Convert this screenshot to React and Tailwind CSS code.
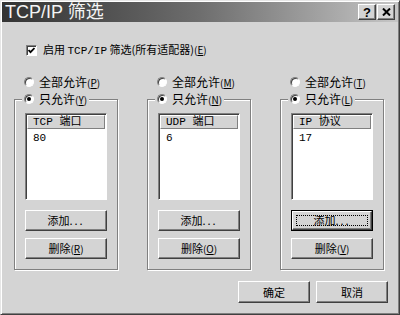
const FACE = "bg-[#d4d4d4]";
const RAISED =
  "border border-t-white border-l-white border-r-[#404040] border-b-[#404040] shadow-[inset_-1px_-1px_0_#808080]";
const SUNKEN =
  "border border-t-[#808080] border-l-[#808080] border-r-white border-b-white shadow-[inset_1px_1px_0_#404040]";
const CJK = "font-['Noto_Sans_CJK_SC',sans-serif]";
const MONO = "font-['Liberation_Mono','Noto_Sans_CJK_SC',monospace]";

const Key = ({ k }) => (
  <span className="text-[10px]">
    (<u>{k}</u>)
  </span>
);

const Radio = ({ checked, label, k }) => (
  <div className="flex items-center gap-[5px] h-[14px]">
    <span className={`w-[10px] h-[10px] rounded-full bg-white flex items-center justify-center ${SUNKEN}`}>
      {checked && <span className="w-[4px] h-[4px] rounded-full bg-black" />}
    </span>
    <span className={`text-[12px] leading-none text-black ${CJK}`}>
      {label}
      <Key k={k} />
    </span>
  </div>
);

const Button = ({ children, focused, className = "" }) => (
  <div className={`${focused ? "border border-black" : ""} ${className}`}>
    <div className={`h-full flex items-center justify-center ${FACE} ${RAISED}`}>
      <div
        className={`flex items-center justify-center text-[11px] leading-none text-black ${CJK} ${
          focused ? "w-[calc(100%-6px)] h-[calc(100%-6px)] border border-dotted border-black" : ""
        }`}
      >
        {children}
      </div>
    </div>
  </div>
);

const Column = ({ all, allKey, only, onlyKey, head, item, delKey, focused }) => (
  <div className="w-[104px] flex flex-col">
    <div className="pl-[10px]">
      <Radio label={all} k={allKey} />
    </div>
    <fieldset className="mt-[3px] min-w-0 border border-[#808080] shadow-[1px_1px_0_white,inset_1px_1px_0_white] px-[10px] pt-[7px] pb-[10px]">
      <legend className={`ml-[-3px] px-[2px] ${FACE}`}>
        <Radio checked label={only} k={onlyKey} />
      </legend>
      <div className={`h-[87px] bg-white p-[1px] ${SUNKEN}`}>
        <div className={`h-[14px] flex items-center pl-[5px] ${FACE} border border-t-white border-l-white border-r-[#808080] border-b-[#808080]`}>
          <span className={`text-[11px] leading-none ${MONO}`}>{head}</span>
        </div>
        <div className={`pl-[6px] pt-[2px] text-[11px] leading-[14px] ${MONO}`}>{item}</div>
      </div>
      <Button focused={focused} className="mt-[10px] h-[21px]">
        添加<span className="tracking-[2px]">...</span>
      </Button>
      <Button className="mt-[7px] h-[21px]">
        删除<Key k={delKey} />
      </Button>
    </fieldset>
  </div>
);

export default function App() {
  return (
    <div
      className={`w-[400px] h-[315px] ${FACE} border border-t-[#e6e6e6] border-l-[#e6e6e6] border-r-[#404040] border-b-[#404040] shadow-[inset_1px_1px_0_white,inset_-1px_-1px_0_#808080] p-[1px] flex flex-col`}
    >
      {/* title bar */}
      <div className="h-[20px] flex items-center justify-between pl-[3px] pr-[3px] bg-gradient-to-r from-[#333333] via-[#6e6e6e] to-[#c6c6c6]">
        <span className="text-[18px] leading-none text-[#f4f4f4] font-['Liberation_Sans','Noto_Sans_CJK_SC',sans-serif]">
          TCP/IP 筛选
        </span>
        <div className="flex gap-[1px]">
          <div className={`w-[18px] h-[16px] flex items-center justify-center ${FACE} ${RAISED}`}>
            <span className="text-[13px] leading-none font-bold font-['Liberation_Sans',sans-serif]">?</span>
          </div>
          <div className={`w-[18px] h-[16px] flex items-center justify-center ${FACE} ${RAISED}`}>
            <svg width="9" height="8" viewBox="0 0 9 8">
              <path d="M1 0.5 L8 7.5 M8 0.5 L1 7.5" stroke="black" strokeWidth="2" />
            </svg>
          </div>
        </div>
      </div>

      {/* enable checkbox */}
      <div className="mt-[22px] pl-[24px] flex items-center gap-[6px] h-[12px]">
        <span className={`w-[11px] h-[11px] bg-white flex items-center justify-center ${SUNKEN}`}>
          <svg width="7" height="7" viewBox="0 0 7 7">
            <path d="M0.5 3 L2.5 5.2 L6.5 1" stroke="black" strokeWidth="1.8" fill="none" />
          </svg>
        </span>
        <span className={`text-[11px] leading-none ${CJK}`}>
          启用 <span className={MONO}>TCP/IP</span> 筛选(所有适配器)
          <Key k="E" />
        </span>
      </div>

      {/* columns */}
      <div className="mt-[19px] pl-[12px] flex gap-[29px]">
        <Column all="全部允许" allKey="P" only="只允许" onlyKey="Y" head="TCP 端口" item="80" delKey="R" />
        <Column all="全部允许" allKey="M" only="只允许" onlyKey="N" head="UDP 端口" item="6" delKey="O" />
        <Column all="全部允许" allKey="T" only="只允许" onlyKey="L" head="IP 协议" item="17" delKey="V" focused />
      </div>

      {/* dialog buttons */}
      <div className="mt-[11px] pr-[10px] flex justify-end gap-[6px]">
        <Button className="w-[72px] h-[22px]">确定</Button>
        <Button className="w-[72px] h-[22px]">取消</Button>
      </div>
    </div>
  );
}
